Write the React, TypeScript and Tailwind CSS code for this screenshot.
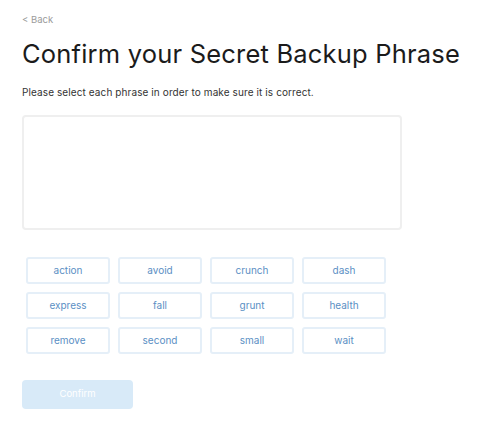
import React from "react";

const words = [
  "action", "avoid", "crunch", "dash",
  "express", "fall", "grunt", "health",
  "remove", "second", "small", "wait",
];

export default function App() {
  return (
    <div className="min-h-screen bg-white px-[22px] pt-[5px] font-['Inter',sans-serif]">
      <button className="text-[9.5px] text-[#9b9b9b]">&lt; Back</button>
      <h1 className="mt-[10px] text-[25.5px] leading-[30px] text-[#1b1b1b] tracking-[0.2px]">
        Confirm your Secret Backup Phrase
      </h1>
      <p className="mt-[16px] text-[10px] tracking-[0.1px] text-[#333]">
        Please select each phrase in order to make sure it is correct.
      </p>
      <div className="mt-[15px] h-[115px] w-[380px] rounded-[4px] border-2 border-[#efefef] bg-white" />
      <div className="mt-[27px] ml-[4px] grid w-[360px] grid-cols-4 gap-x-[8px] gap-y-[8px]">
        {words.map((w) => (
          <div
            key={w}
            className="flex h-[27px] items-center justify-center rounded-[3px] border-2 border-[#e5eff8] text-[10px] text-[#5b8fc4]"
          >
            {w}
          </div>
        ))}
      </div>
      <button className="mt-[26px] h-[29px] w-[111px] rounded-[4px] bg-[#d8eaf8] text-[9.5px] text-white">
        Confirm
      </button>
    </div>
  );
}
